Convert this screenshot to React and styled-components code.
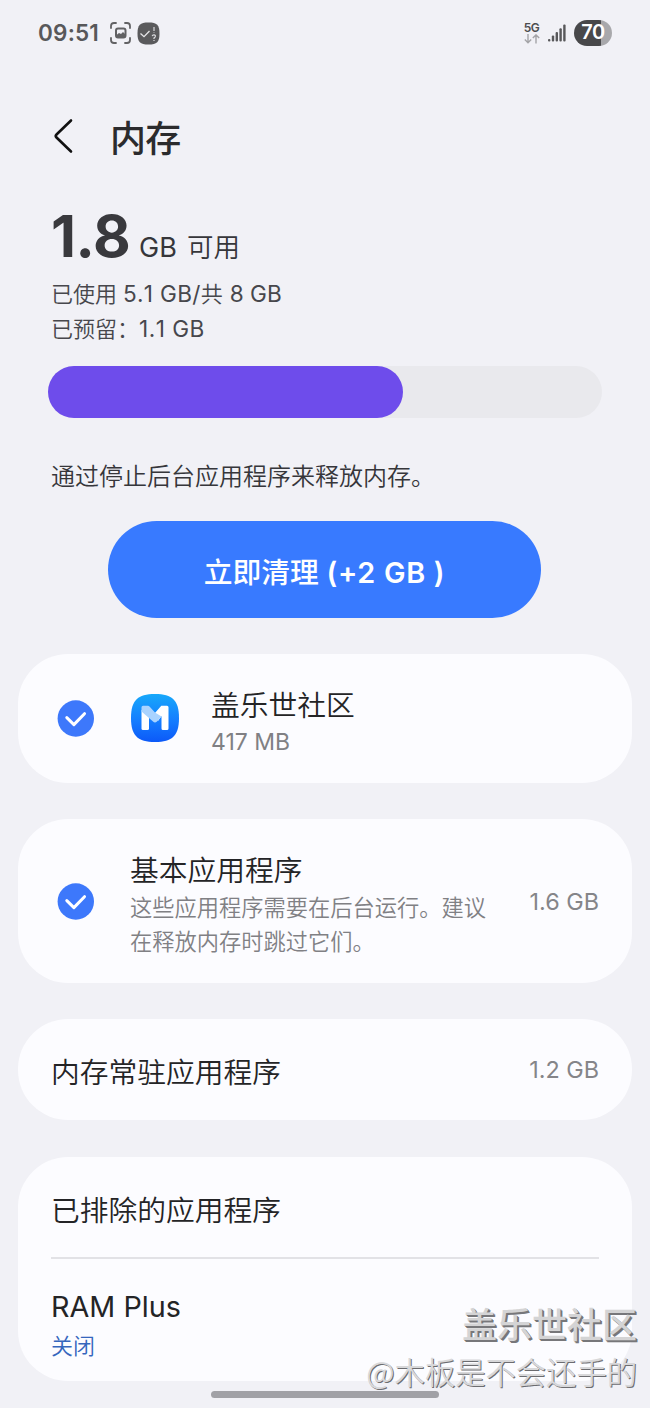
import React from "react";
import styled, { createGlobalStyle } from "styled-components";

const GlobalStyle = createGlobalStyle`
  * { box-sizing: border-box; }
  body {
    margin: 0;
    background: #f1f1f6;
    font-family: Inter, "Noto Sans CJK SC", sans-serif;
    font-weight: 350;
    color: #242426;
  }
`;

const Screen = styled.main`
  position: relative;
  width: 650px;
  height: 1408px;
  overflow: hidden;
  display: flex;
  flex-direction: column;
  background: #f1f1f6;
`;

const StatusBar = styled.div`
  height: 66px;
  padding: 0 38px;
  display: flex;
  align-items: center;
  justify-content: space-between;
`;

const StatusGroup = styled.div`
  display: flex;
  align-items: center;
`;

const Clock = styled.span`
  width: 72px;
  font: 600 22.5px/30px Inter, sans-serif;
  letter-spacing: 0.2px;
  color: #58585a;
`;

const StatusIcon = styled.svg`
  display: block;
  margin-left: ${(p) => p.$gap || 0}px;
`;

const Network = styled.div`
  width: 17px;
  display: flex;
  flex-direction: column;
  align-items: center;
  font: 600 12px/12px Inter, sans-serif;
  letter-spacing: -0.4px;
  color: #4c4c4e;
`;

const Battery = styled.div`
  width: 38px;
  height: 26px;
  margin-left: 8px;
  border-radius: 13px;
  background: linear-gradient(90deg, #48484a 70%, #a8a8ab 70%);
  color: #fff;
  font: 600 20px/25px Inter, sans-serif;
  letter-spacing: -0.5px;
  text-align: center;
`;

const Header = styled.header`
  height: 140px;
  padding-left: 52px;
  display: flex;
  align-items: center;
`;

const Title = styled.h1`
  margin: 5px 0 0 34px;
  font-size: 36px;
  line-height: 44px;
  font-weight: 500;
  letter-spacing: -0.7px;
  color: #2b2b2d;
`;

const Summary = styled.section`
  height: 160px;
  padding-left: 51px;
  color: #36363a;
`;

const Available = styled.div`
  height: 70px;
  display: flex;
  align-items: baseline;
  font-size: 26.5px;
  line-height: 60px;
`;

const Amount = styled.strong`
  width: 88px;
  font-size: 58px;
  font-weight: 700;
  letter-spacing: -0.4px;
  color: #39393d;
`;

const Unit = styled.span`
  margin-right: 10px;
  font-size: 27px;
  font-weight: 400;
  letter-spacing: 0.1px;
`;

const Detail = styled.div`
  height: 35px;
  font-size: 22px;
  line-height: 35px;
  color: #47474c;
  white-space: nowrap;
`;

const Figures = styled.span`
  font-size: 22.6px;
  font-weight: 400;
  font-kerning: none;
  letter-spacing: ${(p) => p.$spacing || 0}px;
  margin-left: ${(p) => p.$before || 0}px;
`;

const Meter = styled.div`
  width: 554px;
  height: 52px;
  margin-left: 48px;
  border-radius: 26px;
  background: #e9e9ed;
`;

const MeterFill = styled.div`
  width: 355px;
  height: 52px;
  border-radius: 26px;
  background: #6e4ceb;
`;

const Hint = styled.p`
  height: 103px;
  margin: 0;
  padding: 41px 0 0 51px;
  font-size: 24px;
  line-height: 36px;
  color: #36363a;
`;

const CleanButton = styled.button`
  width: 433px;
  height: 97px;
  margin: 0 0 36px 108px;
  padding: 6px 0 0;
  border: 0;
  border-radius: 49px;
  background: #387aff;
  color: #fff;
  font: 500 28.8px/40px Inter, "Noto Sans CJK SC", sans-serif;
`;

const Gain = styled.span`
  font-weight: 600;
  letter-spacing: 0.7px;
`;

const Card = styled.section`
  width: 614px;
  height: ${(p) => p.$height}px;
  margin: 0 0 ${(p) => p.$after || 0}px 18px;
  padding: 0 33px;
  border-radius: 50px;
  background: #fcfcff;
  display: flex;
  flex-direction: ${(p) => (p.$stack ? "column" : "row")};
  align-items: ${(p) => (p.$stack ? "stretch" : "center")};
`;

const CheckMark = styled.svg`
  flex: none;
  margin: 0 ${(p) => p.$gap}px 0 6px;
`;

const AppLogo = styled.svg`
  flex: none;
  margin-right: 31px;
`;

const Copy = styled.div`
  flex: 1;
  padding-top: ${(p) => p.$top || 0}px;
  white-space: nowrap;
`;

const Name = styled.div`
  font-size: 28.75px;
  line-height: 40px;
  font-weight: ${(p) => (p.$latin ? 400 : 350)};
`;

const Note = styled.div`
  margin-top: ${(p) => p.$top || 0}px;
  font-size: ${(p) => p.$size || 22.25}px;
  line-height: 34px;
  font-weight: ${(p) => (p.$latin ? 400 : 350)};
  color: ${(p) => (p.$link ? "#3566bd" : "#808084")};
`;

const Size = styled.span`
  font-size: 23.4px;
  font-weight: 400;
  color: #858589;
`;

const Row = styled.div`
  height: ${(p) => p.$height}px;
  padding-top: ${(p) => p.$top}px;
  border-bottom: ${(p) => (p.$divided ? "2px solid #e2e2e6" : "0")};
`;

const HomeHandle = styled.div`
  width: 228px;
  height: 7px;
  margin: 10px 0 0 211px;
  border-radius: 4px;
  background: #a1a1a6;
`;

const Watermark = styled.div`
  position: absolute;
  right: 13px;
  bottom: 14px;
  text-align: right;
  white-space: nowrap;
`;

const MarkBrand = styled.div`
  font-size: 35px;
  line-height: 46px;
  font-weight: 500;
  color: #d4d4d5;
  text-shadow: 1px 1px 0 #77777a, 2px 2px 0 #77777a;
`;

const MarkAuthor = styled.div`
  font-size: 30.3px;
  line-height: 46px;
  font-weight: 350;
  font-family: "Noto Sans CJK SC", sans-serif;
  color: #d8d8da;
  text-shadow: 1px 1px 0 #6c6c70;
`;

function Check({ gap }) {
  return (
    <CheckMark $gap={gap} width="37" height="37" viewBox="0 0 37 37">
      <circle cx="18.8" cy="18.5" r="18.2" fill="#3d78fb" />
      <path d="M9.8 17.6 L16.9 24.6 L27.5 13.7" fill="none" stroke="#fff" strokeWidth="3" strokeLinecap="round" strokeLinejoin="round" />
    </CheckMark>
  );
}

function CommunityLogo() {
  return (
    <AppLogo width="49" height="49" viewBox="0 0 49 49">
      <defs>
        <linearGradient id="logoBlue" x1="0" y1="0" x2="0" y2="1">
          <stop offset="0" stopColor="#17a8fa" />
          <stop offset="0.55" stopColor="#147dff" />
          <stop offset="1" stopColor="#0c59f8" />
        </linearGradient>
      </defs>
      <path d="M24 0C41.5 0 48 6.5 48 24S41.5 48 24 48 0 41.5 0 24 6.5 0 24 0Z" fill="url(#logoBlue)" />
      <path d="M10.5 16 L18 21 V34.5 Q18 36 16.5 36 H12 Q10.5 36 10.5 34.5Z" fill="#fff" />
      <path d="M23.5 19.5 L30.3 11.8 H36 Q37.5 11.8 37.5 13.3 V34.5 Q37.5 36 36 36 H32 Q30.5 36 30.5 34.5 V22 L27 27Z" fill="#fff" />
      <path d="M10.5 13.3 Q10.5 11.8 12 11.8 H17 Q17.8 11.8 18.5 12.5 L24 18.5 L30.5 22.5 L26 27.5 Q24 29.5 22 27.5 L10.5 17.5Z" fill="#a9d3ff" />
    </AppLogo>
  );
}

export default function App() {
  return (
    <Screen lang="zh-CN">
      <GlobalStyle />
      <StatusBar>
        <StatusGroup>
          <Clock>09:51</Clock>
          <StatusIcon width="21" height="22" viewBox="0 0 21 22" fill="none" stroke="#626264" strokeWidth="1.8" strokeLinecap="round">
            <path d="M1 6V4Q1 1 4 1H6M15 1H17Q20 1 20 4V6M20 16V18Q20 21 17 21H15M6 21H4Q1 21 1 18V16" />
            <rect x="6" y="6.5" width="9.5" height="9" rx="2" strokeWidth="2" />
            <path d="M6.5 13 L9 11 L11 12 L13 10 L15 12 V15 H7Z" fill="#626264" stroke="none" />
          </StatusIcon>
          <StatusIcon $gap={6} width="23" height="23" viewBox="0 0 23 23" fill="none">
            <path d="M11.5 .5C20 .5 22.5 3 22.5 11.5S20 22.5 11.5 22.5 .5 20 .5 11.5 3 .5 11.5 .5Z" fill="#5a5a5c" />
            <path d="M3.5 11.5 L7 14.7 L12.5 9" stroke="#e6e6e8" strokeWidth="1.3" />
            <path d="M17 5V9M17 10.4V11M15.2 14.2Q15.5 12.8 17 12.9 19 13.2 18.2 14.8L17 16V17M17 18V19" stroke="#dadadd" strokeWidth="1.2" />
          </StatusIcon>
        </StatusGroup>
        <StatusGroup>
          <Network>
            5G
            <svg width="16" height="10" viewBox="0 0 16 10" fill="none" stroke="#a4a4a7" strokeWidth="1.4">
              <path d="M4 0V8.5M.8 5.5 4 8.7 7.2 5.5M12 9.5V1M8.8 4 12 .9 15.2 4" />
            </svg>
          </Network>
          <StatusIcon $gap={8} width="18" height="18" viewBox="0 0 18 18" fill="#58585a">
            <rect x="0" y="15" width="2.4" height="2.6" rx="1" />
            <rect x="3.8" y="11.5" width="2.4" height="6" rx="1" />
            <rect x="7.6" y="8" width="2.4" height="9.5" rx="1" />
            <rect x="11.4" y="4.2" width="2.4" height="13.3" rx="1" />
            <rect x="15.2" y="0.5" width="2.4" height="17" rx="1" />
          </StatusIcon>
          <Battery>70</Battery>
        </StatusGroup>
      </StatusBar>

      <Header>
        <svg width="24" height="36" viewBox="0 0 24 36">
          <path d="M19 2.5 L4.5 16.5 Q3 18 4.5 19.5 L19 33.5" fill="none" stroke="#111" strokeWidth="2.6" strokeLinecap="round" />
        </svg>
        <Title>内存</Title>
      </Header>

      <Summary>
        <Available><Amount>1.8</Amount><Unit>GB</Unit>可用</Available>
        <Detail>已使用<Figures $before={6} $spacing={0.3}>5.1 GB/</Figures>共<Figures $before={7}>8 GB</Figures></Detail>
        <Detail>已预留：<Figures $spacing={0.5}>1.1 GB</Figures></Detail>
      </Summary>

      <Meter><MeterFill /></Meter>
      <Hint>通过停止后台应用程序来释放内存。</Hint>
      <CleanButton>立即清理 <Gain>(+2 GB )</Gain></CleanButton>

      <Card $height={129} $after={36}>
        <Check gap={37} />
        <CommunityLogo />
        <Copy $top={7}>
          <Name>盖乐世社区</Name>
          <Note $size={23} $top={-1} $latin>417 MB</Note>
        </Copy>
      </Card>

      <Card $height={164} $after={36}>
        <Check gap={36} />
        <Copy $top={8}>
          <Name>基本应用程序</Name>
          <Note>这些应用程序需要在后台运行。建议<br />在释放内存时跳过它们。</Note>
        </Copy>
        <Size>1.6 GB</Size>
      </Card>

      <Card $height={101} $after={37}>
        <Copy $top={6}><Name>内存常驻应用程序</Name></Copy>
        <Size>1.2 GB</Size>
      </Card>

      <Card $height={224} $stack>
        <Row $height={102} $top={34} $divided><Name>已排除的应用程序</Name></Row>
        <Row $height={122} $top={28}>
          <Name $latin>RAM Plus</Name>
          <Note $size={22} $top={2} $link>关闭</Note>
        </Row>
      </Card>

      <HomeHandle />
      <Watermark>
        <MarkBrand>盖乐世社区</MarkBrand>
        <MarkAuthor>@木板是不会还手的</MarkAuthor>
      </Watermark>
    </Screen>
  );
}
